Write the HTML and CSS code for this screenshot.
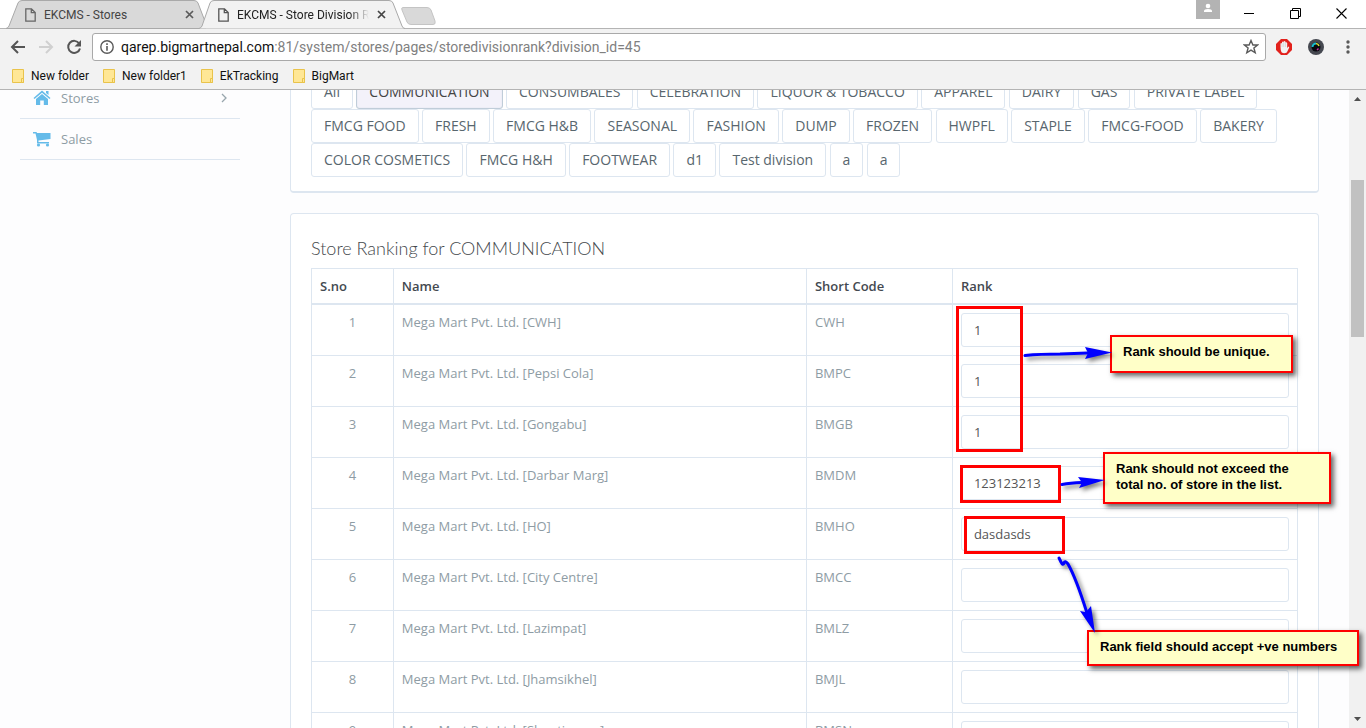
FILE: index.html
```html
<!DOCTYPE html>
<html lang="en">
<head>
<meta charset="utf-8">
<title>EKCMS - Store Division Rank</title>
<link rel="stylesheet" href="styles.css">
</head>
<body>
<header class="browser">
  <div class="tabstrip">
    <div class="tab">
      <svg class="tab-shape" viewBox="0 0 200 29"><path d="M0 28.500Q2 28 3 26L12 3Q13 .5 16 .5H188Q191 .5 192 3L200 24V28.500Z" fill="#d9d9d9" stroke="#a9a9a9"/></svg>
      <svg class="page-icon" viewBox="0 0 11 14"><path d="M.8.800H6.500L10.200 4.500V13.200H.8ZM6.300.800V4.700H10.200" fill="none" stroke="#666" stroke-width="1.300"/></svg>
      <span class="tab-title">EKCMS - Stores</span>
      <button class="tab-close" aria-label="Close tab"><svg viewBox="0 0 9 9"><path d="M1 1L8 8M8 1L1 8" stroke="#5a5a5a" stroke-width="1.700"/></svg></button>
    </div>
    <div class="tab tab-active">
      <svg class="tab-shape" viewBox="0 0 206 29"><path d="M0 28.500Q2 28 3 26L11 3Q12 .5 15 .5H190Q193 .5 194 3L203 26Q204 28.500 206 28.500" fill="#f2f2f2" stroke="#a9a9a9"/></svg>
      <svg class="page-icon" viewBox="0 0 11 14"><path d="M.8.800H6.500L10.200 4.500V13.200H.8ZM6.300.800V4.700H10.200" fill="none" stroke="#555" stroke-width="1.300"/></svg>
      <span class="tab-title tab-fade">EKCMS - Store Division Rank</span>
      <button class="tab-close" aria-label="Close tab"><svg viewBox="0 0 9 9"><path d="M1 1L8 8M8 1L1 8" stroke="#444" stroke-width="1.700"/></svg></button>
    </div>
    <button class="new-tab" aria-label="New tab"><svg viewBox="0 0 36 18"><path d="M2 .5H26Q29 .5 30 3L34 14Q35 17.500 32 17.500H10Q7 17.500 6 15L1 3Q0 .5 2 .5Z" fill="#d9d9d9" stroke="#c4c4c4"/></svg></button>
    <div class="window-controls">
      <button class="profile" aria-label="Profile"><svg viewBox="0 0 24 19"><rect width="24" height="19" fill="#b3b3b3"/><circle cx="12" cy="6" r="2.300" fill="#fff"/><path d="M8 12V11Q8 9 12 9T16 11V12Z" fill="#fff"/></svg></button>
      <button aria-label="Minimize"><svg viewBox="0 0 11 11"><path d="M0 5.500H10" stroke="#000"/></svg></button>
      <button aria-label="Restore"><svg viewBox="0 0 11 11"><path d="M.5 2.500H8.500V10.500H.5ZM2.500 2.500V.5H10.500V8.500H8.500" fill="none" stroke="#000"/></svg></button>
      <button aria-label="Close window"><svg viewBox="0 0 11 11"><path d="M.5.500L10.500 10.500M10.500.500L.5 10.500" stroke="#000" stroke-width="1.100"/></svg></button>
    </div>
  </div>
  <div class="toolbar">
    <button class="nav" aria-label="Back"><svg viewBox="0 0 16 16"><path d="M15 8H2.500M8 2L2 8L8 14" fill="none" stroke="#555" stroke-width="2"/></svg></button>
    <button class="nav" aria-label="Forward"><svg viewBox="0 0 16 16"><path d="M1 8H13.500M8 2L14 8L8 14" fill="none" stroke="#d0d0d0" stroke-width="2"/></svg></button>
    <button class="nav" aria-label="Reload"><svg viewBox="0 0 16 16"><path d="M13.200 4.500A6 6 0 1 0 14 9.500" fill="none" stroke="#555" stroke-width="2"/><path d="M15 1V7.500H8.500Z" fill="#555"/></svg></button>
    <div class="omnibox">
      <svg class="info" viewBox="0 0 14 14"><circle cx="7" cy="7" r="6.200" fill="none" stroke="#5a5a5a" stroke-width="1.400"/><path d="M7 6V10.700M7 3.300V4.900" stroke="#5a5a5a" stroke-width="1.600"/></svg>
      <span class="url">qarep.bigmartnepal.com<span class="url-path">:81/system/stores/pages/storedivisionrank?division_id=45</span></span>
      <button class="star" aria-label="Bookmark this page"><svg viewBox="0 0 16 16"><path d="M8 1.500L9.900 6H14.600L10.900 9L12.200 13.800L8 11.100L3.800 13.800L5.100 9L1.400 6H6.100Z" fill="none" stroke="#5a5a5a" stroke-width="1.400"/></svg></button>
    </div>
    <button class="ext" aria-label="Ad blocker"><svg viewBox="0 0 16 16"><path d="M5 0H11L16 5V11L11 16H5L0 11V5Z" fill="#e2211c"/><path d="M4.500 8V4.500Q5.200 3.500 6 4.500V3Q7 2 7.700 3V2.500Q8.700 1.500 9.500 2.700V3.500Q10.500 2.800 11.200 4V9L12.500 7.500Q13.700 7.500 13 9L10.800 13.500Q8 15 5.500 13.300Q4.500 11.500 4.500 8Z" fill="#f2f2f2"/><path d="M6 4.500V8M7.700 3V8M9.500 3.500V8" stroke="#ccc" stroke-width=".6"/></svg></button>
    <button class="ext" aria-label="Screen capture"><svg viewBox="0 0 16 16"><circle cx="8" cy="8" r="8" fill="#454850"/><circle cx="8" cy="8" r="4.500" fill="#080a10"/><path d="M4.500 8A3.500 3.500 0 0 1 8 4.500" fill="none" stroke="#17bed0" stroke-width="2"/><path d="M8 4.500A3.500 3.500 0 0 1 11 7" fill="none" stroke="#d4dc35" stroke-width="1.500"/><path d="M10.500 9.500L9 11" stroke="#d02ba0" stroke-width="1.500"/></svg></button>
    <button class="menu" aria-label="Menu"><svg viewBox="0 0 4 14"><g fill="#5a5a5a"><circle cx="2" cy="2" r="1.700"/><circle cx="2" cy="7" r="1.700"/><circle cx="2" cy="12" r="1.700"/></g></svg></button>
  </div>
  <nav class="bookmarks">
    <a href="#"><svg viewBox="0 0 12 14"><path d="M.5.500H11.500V13.500H.5Z" fill="#ffe796" stroke="#e9c34b"/><path d="M9.500 9.500H11.500V13.500H9.500Z" fill="#ffe796" stroke="#e9c34b"/></svg>New folder</a>
    <a href="#"><svg viewBox="0 0 12 14"><path d="M.5.500H11.500V13.500H.5Z" fill="#ffe796" stroke="#e9c34b"/><path d="M9.500 9.500H11.500V13.500H9.500Z" fill="#ffe796" stroke="#e9c34b"/></svg>New folder1</a>
    <a href="#"><svg viewBox="0 0 12 14"><path d="M.5.500H11.500V13.500H.5Z" fill="#ffe796" stroke="#e9c34b"/><path d="M9.500 9.500H11.500V13.500H9.500Z" fill="#ffe796" stroke="#e9c34b"/></svg>EkTracking</a>
    <a href="#"><svg viewBox="0 0 12 14"><path d="M.5.500H11.500V13.500H.5Z" fill="#ffe796" stroke="#e9c34b"/><path d="M9.500 9.500H11.500V13.500H9.500Z" fill="#ffe796" stroke="#e9c34b"/></svg>BigMart</a>
  </nav>
</header>

<div class="viewport">
  <nav class="sidebar">
    <a href="#" class="side-link">
      <svg viewBox="0 0 18 16"><path d="M9 .5L17.500 8L16.500 9L9 2.700L1.500 9L.5 8ZM13 1H15.500V5L13 3ZM9 4L15 9V15H10.800V10.500H7.200V15H3V9Z" fill="#65bbe9"/></svg>
      <span>Stores</span>
      <svg class="chevron" viewBox="0 0 6 10"><path d="M1 1L5 5L1 9" fill="none" stroke="#98a6ad" stroke-width="1.300"/></svg>
    </a>
    <a href="#" class="side-link">
      <svg viewBox="0 0 18 16"><path d="M0 1H3.500L4 2H17.500V8L5.500 9.500V11H16V12.500H4V9L2.500 2.500H0Z" fill="#65bbe9"/><circle cx="5.500" cy="14" r="1.600" fill="#65bbe9"/><circle cx="14.500" cy="14" r="1.600" fill="#65bbe9"/></svg>
      <span>Sales</span>
    </a>
  </nav>
  <main class="content">
    <section class="card divisions">
      <a href="#" class="btn">All</a>
      <a href="#" class="btn btn-active">COMMUNICATION</a>
      <a href="#" class="btn">CONSUMBALES</a>
      <a href="#" class="btn">CELEBRATION</a>
      <a href="#" class="btn">LIQUOR &amp; TOBACCO</a>
      <a href="#" class="btn">APPAREL</a>
      <a href="#" class="btn">DAIRY</a>
      <a href="#" class="btn">GAS</a>
      <a href="#" class="btn">PRIVATE LABEL</a>
      <a href="#" class="btn">FMCG FOOD</a>
      <a href="#" class="btn">FRESH</a>
      <a href="#" class="btn">FMCG H&amp;B</a>
      <a href="#" class="btn">SEASONAL</a>
      <a href="#" class="btn">FASHION</a>
      <a href="#" class="btn">DUMP</a>
      <a href="#" class="btn">FROZEN</a>
      <a href="#" class="btn">HWPFL</a>
      <a href="#" class="btn">STAPLE</a>
      <a href="#" class="btn">FMCG-FOOD</a>
      <a href="#" class="btn">BAKERY</a>
      <a href="#" class="btn">COLOR COSMETICS</a>
      <a href="#" class="btn">FMCG H&amp;H</a>
      <a href="#" class="btn">FOOTWEAR</a>
      <a href="#" class="btn">d1</a>
      <a href="#" class="btn">Test division</a>
      <a href="#" class="btn">a</a>
      <a href="#" class="btn">a</a>
    </section>
    <section class="card ranking">
      <h4 class="title">Store Ranking for COMMUNICATION</h4>
      <table class="rank-table">
        <colgroup><col class="col-no"><col class="col-name"><col class="col-code"><col></colgroup>
        <thead><tr><th>S.no</th><th>Name</th><th>Short Code</th><th>Rank</th></tr></thead>
        <tbody>
          <tr><td>1</td><td>Mega Mart Pvt. Ltd. [CWH]</td><td>CWH</td><td><input type="text" aria-label="Rank for CWH" value="1"></td></tr>
          <tr><td>2</td><td>Mega Mart Pvt. Ltd. [Pepsi Cola]</td><td>BMPC</td><td><input type="text" aria-label="Rank for BMPC" value="1"></td></tr>
          <tr><td>3</td><td>Mega Mart Pvt. Ltd. [Gongabu]</td><td>BMGB</td><td><input type="text" aria-label="Rank for BMGB" value="1"></td></tr>
          <tr><td>4</td><td>Mega Mart Pvt. Ltd. [Darbar Marg]</td><td>BMDM</td><td><input type="text" aria-label="Rank for BMDM" value="123123213"></td></tr>
          <tr><td>5</td><td>Mega Mart Pvt. Ltd. [HO]</td><td>BMHO</td><td><input type="text" aria-label="Rank for BMHO" value="dasdasds"></td></tr>
          <tr><td>6</td><td>Mega Mart Pvt. Ltd. [City Centre]</td><td>BMCC</td><td><input type="text" aria-label="Rank for BMCC"></td></tr>
          <tr><td>7</td><td>Mega Mart Pvt. Ltd. [Lazimpat]</td><td>BMLZ</td><td><input type="text" aria-label="Rank for BMLZ"></td></tr>
          <tr><td>8</td><td>Mega Mart Pvt. Ltd. [Jhamsikhel]</td><td>BMJL</td><td><input type="text" aria-label="Rank for BMJL"></td></tr>
          <tr><td>9</td><td>Mega Mart Pvt. Ltd. [Shantinagar]</td><td>BMSN</td><td><input type="text" aria-label="Rank for BMSN"></td></tr>
        </tbody>
      </table>
    </section>
  </main>
  <div class="scrollbar">
    <svg class="scroll-arrow" viewBox="0 0 17 17"><path d="M5 11L8.500 7L12 11Z" fill="#505050"/></svg>
    <div class="scroll-track"><div class="thumb"></div></div>
    <svg class="scroll-arrow" viewBox="0 0 17 17"><path d="M5 6L8.500 10L12 6Z" fill="#505050"/></svg>
  </div>
</div>

<div class="notes">
  <div class="frame frame-unique"></div>
  <div class="frame frame-limit"></div>
  <div class="frame frame-number"></div>
  <p class="callout callout-unique">Rank should be unique.</p>
  <p class="callout callout-limit">Rank should not exceed the<br>total no. of store in the list.</p>
  <p class="callout callout-number">Rank field should accept +ve numbers</p>
  <svg class="arrows" viewBox="0 0 1366 728">
    <g fill="none" stroke="#00f" stroke-width="3" stroke-linecap="round" stroke-linejoin="round">
      <path d="M1025 355.500Q1040 354 1060 354L1088 353"/>
      <path d="M1062 484.500Q1070 483 1082 482.500"/>
      <path d="M1059 558L1061 562Q1063 566 1064 563Q1065 560 1068 564Q1076 578 1087 613"/>
    </g>
    <g fill="#00f">
      <path d="M1112 352.500L1085 347L1088 353L1085 359Z"/>
      <path d="M1105 480L1078 477L1082 482.500L1079 488Z"/>
      <path d="M1095 633L1080 611L1086 612L1091 606Z"/>
    </g>
  </svg>
</div>
</body>
</html>
```
FILE: styles.css
```css
* { box-sizing: border-box; }

body {
  margin: 0;
  height: 100vh;
  overflow: hidden;
  position: relative;
  display: flex;
  flex-direction: column;
  background: #fdfdfe;
  font: 13px/19px "Open Sans", sans-serif;
  color: #8e9ca4;
}

button { padding: 0; border: 0; background: none; display: flex; }
a { color: inherit; text-decoration: none; }
svg { display: block; flex: none; }

/* Browser frame */
.browser {
  flex: none;
  background: #f2f2f2;
  border-bottom: 1px solid #b4b4b4;
  color: #111;
  font: 12px/16px Roboto, sans-serif;
}
.tabstrip {
  display: flex;
  height: 29px;
  padding-left: 6px;
  background: #fff;
  box-shadow: inset 0 -1px #b4b4b4;
}
.tab {
  position: relative;
  display: flex;
  align-items: center;
  width: 200px;
  padding: 0 12px 0 19px;
  color: #444;
}
.tab-active { width: 206px; margin-left: -7px; padding-right: 19px; color: #222; }
.tab-shape { position: absolute; left: 0; top: 0; width: 100%; height: 29px; }
.page-icon { position: relative; width: 11px; height: 14px; margin-right: 8px; }
.tab-title { position: relative; flex: 1; overflow: hidden; white-space: nowrap; }
.tab-fade {
  margin-right: 8px;
  -webkit-mask-image: linear-gradient(to right, #000 85%, transparent);
  mask-image: linear-gradient(to right, #000 85%, transparent);
}
.tab-close { position: relative; }
.tab-close svg { width: 9px; height: 9px; }
.new-tab { padding-top: 7px; margin-left: -4px; }
.new-tab svg { width: 36px; height: 18px; }
.window-controls { margin-left: auto; display: flex; gap: 35px; padding: 0 19px 0 0; }
.window-controls svg { width: 11px; height: 11px; margin-top: 8px; }
.window-controls .profile { margin-right: -11px; }
.window-controls .profile svg { width: 24px; height: 19px; margin-top: 0; }

.toolbar { display: flex; align-items: center; height: 36px; padding: 0 16px 0 10px; }
.nav { margin-right: 12px; }
.nav svg { width: 16px; height: 16px; }
.omnibox {
  flex: 1;
  display: flex;
  align-items: center;
  height: 28px;
  margin: 0 10px 0 -2px;
  padding: 0 6px 0 7px;
  border: 1px solid #a9a9a9;
  border-radius: 3px;
  background: #fff;
}
.info { width: 14px; height: 14px; margin-right: 7px; }
.url { flex: 1; font-size: 14px; line-height: 20px; }
.url-path { color: #808080; }
.star svg { width: 16px; height: 16px; }
.ext { margin-right: 16px; }
.ext svg { width: 16px; height: 16px; }
.menu { margin-left: 6px; }
.menu svg { width: 4px; height: 14px; }

.bookmarks { display: flex; gap: 14px; height: 24px; padding: 0 12px 2px; align-items: center; }
.bookmarks a { display: flex; align-items: center; gap: 7px; }
.bookmarks svg { width: 12px; height: 14px; }

/* Page */
.viewport { flex: 1; min-height: 0; display: flex; overflow: hidden; }

.sidebar { flex: none; width: 290px; padding: 0 50px 0 20px; margin-top: -12px; }
.side-link {
  display: flex;
  align-items: center;
  gap: 10px;
  height: 41px;
  padding: 0 13px;
  border-bottom: 1px solid #dde6f0;
}
.side-link svg { width: 18px; height: 16px; }
.side-link .chevron { width: 6px; height: 10px; margin-left: auto; }

.content { flex: 1; min-width: 0; margin-top: -36px; padding-right: 30px; }
.card {
  margin-bottom: 20px;
  padding: 20px 20px 14px;
  border: 1px solid #dde6f0;
  border-bottom-width: 2px;
  border-radius: 4px;
  background: #fff;
}
.btn {
  display: inline-block;
  vertical-align: top;
  padding: 6px 12px;
  border: 1px solid #dde6f0;
  border-radius: 3px;
  color: #58666e;
  font-size: 14px;
  line-height: 20px;
}
.btn-active { border-color: #c0cdd9; background: #f3f2fa; box-shadow: inset 0 0 1px #c0cdd9; color: #444; }

.title {
  margin: 0 0 6px;
  color: #44484c;
  font: 300 18px/28px Lato, sans-serif;
}
.rank-table { width: 100%; table-layout: fixed; border-collapse: collapse; }
.col-no { width: 8.3%; }
.col-name { width: 41.9%; }
.col-code { width: 14.8%; }
.rank-table th,
.rank-table td { padding: 8px; border: 1px solid #dde6f0; text-align: left; vertical-align: top; }
.rank-table th { border-bottom-width: 2px; color: #444950; font-weight: 600; line-height: 18px; }
.rank-table td:first-child { text-align: center; }
.rank-table input {
  display: block;
  width: 100%;
  height: 34px;
  padding: 6px 12px;
  border: 1px solid #dde6f0;
  border-radius: 3px;
  background: #fff;
  color: #555;
  font: inherit;
}

.scrollbar { flex: none; width: 17px; background: #f1f1f1; display: flex; flex-direction: column; }
.scroll-arrow { width: 17px; height: 17px; }
.scroll-track { flex: 1; padding: 73px 2px 0; }
.thumb { height: 157px; background: #c1c1c1; }

/* Review notes drawn over the page */
.notes { position: absolute; inset: 0; pointer-events: none; }
.arrows {
  position: absolute;
  left: 0;
  top: 0;
  width: 1366px;
  height: 728px;
  filter: drop-shadow(3px 3px 2px rgba(0, 0, 0, .5));
}
.frame { position: absolute; border: 3px solid #f00; }
.frame-unique { left: 956px; top: 306px; width: 67px; height: 146px; }
.frame-limit { left: 960px; top: 465px; width: 101px; height: 38px; }
.frame-number { left: 964px; top: 516px; width: 101px; height: 38px; }
.callout {
  position: absolute;
  margin: 0;
  padding: 7px 11px;
  border: 2px solid #f00;
  background: #ffffc8;
  box-shadow: 3px 3px 5px rgba(0, 0, 0, .6);
  color: #000;
  font: bold 13px/16px "Liberation Sans", Arial, sans-serif;
  white-space: nowrap;
}
.callout-unique { left: 1110px; top: 335px; width: 183px; height: 38px; }
.callout-limit { left: 1103px; top: 452px; width: 228px; height: 52px; }
.callout-number { left: 1087px; top: 630px; width: 272px; height: 36px; }
```
